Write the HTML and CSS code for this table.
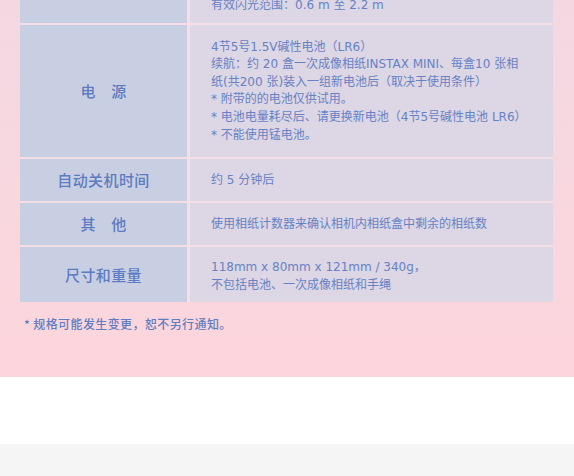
FILE: index.html
```html
<!DOCTYPE html>
<html lang="zh-CN">
<head>
<meta charset="utf-8">
<title>规格</title>
<link rel="stylesheet" href="styles.css">
</head>
<body>
<section class="spec">
  <div class="spec-table">
    <div class="label"></div>
    <div class="value value-first">有效闪光范围：0.6 m 至 2.2 m</div>

    <div class="label">电　源</div>
    <div class="value value-long">4节5号1.5V碱性电池（LR6）<br>续航：约 20 盒一次成像相纸INSTAX MINI、每盒10 张相<br>纸(共200 张)装入一组新电池后（取决于使用条件）<br>* 附带的的电池仅供试用。<br>* 电池电量耗尽后、请更换新电池（4节5号碱性电池 LR6）<br>* 不能使用锰电池。</div>

    <div class="label">自动关机时间</div>
    <div class="value">约 5 分钟后</div>

    <div class="label">其　他</div>
    <div class="value">使用相纸计数器来确认相机内相纸盒中剩余的相纸数</div>

    <div class="label">尺寸和重量</div>
    <div class="value value-tight">118mm x 80mm x 121mm / 340g，<br>不包括电池、一次成像相纸和手绳</div>
  </div>
  <p class="note">* 规格可能发生变更，恕不另行通知。</p>
</section>
<div class="blank"></div>
<footer class="footer"></footer>
</body>
</html>
```
FILE: styles.css
```css
html, body {
  margin: 0;
  padding: 0;
}
body {
  background: #f5f5f5;
  font-family: "Noto Sans CJK SC", "Noto Sans", sans-serif;
  color: #6682c4;
}
.spec {
  background: linear-gradient(180deg, #f3d8e2 0%, #f8d7df 50%, #fdd5dc 100%);
  padding: 0 21px 44px 20px;
  overflow: hidden;
}
.spec-table {
  display: grid;
  grid-template-columns: 167px 1fr;
  column-gap: 3px;
  row-gap: 2px;
  margin-top: -42px;
  background: #f6dee7;
}
.label {
  background: #c9cfe2;
  color: #5c7bc1;
  font-size: 15px;
  font-weight: 500;
  letter-spacing: 0.4px;
  display: flex;
  align-items: center;
  justify-content: center;
  line-height: 20px;
  padding: 11px 0;
}
.value {
  background: #ddd6e4;
  font-family: "DejaVu Sans", "Noto Sans CJK SC", sans-serif;
  font-size: 12px;
  line-height: 17.6px;
  padding: 13px 10px 11px 21px;
  white-space: nowrap;
}
.value-first {
  padding-top: 39px;
  padding-bottom: 8px;
}
.value-long {
  padding-top: 14px;
  padding-bottom: 13px;
}
.value-tight {
  padding-top: 12px;
  padding-bottom: 8px;
}
.note {
  margin: 13px 0 0 4px;
  font-size: 12px;
  font-weight: 500;
  letter-spacing: 0.4px;
  line-height: 18px;
  color: #5f7dc2;
}
.blank {
  height: 67px;
  background: #ffffff;
}
.footer {
  height: 40px;
  background: #f5f5f5;
}
```
